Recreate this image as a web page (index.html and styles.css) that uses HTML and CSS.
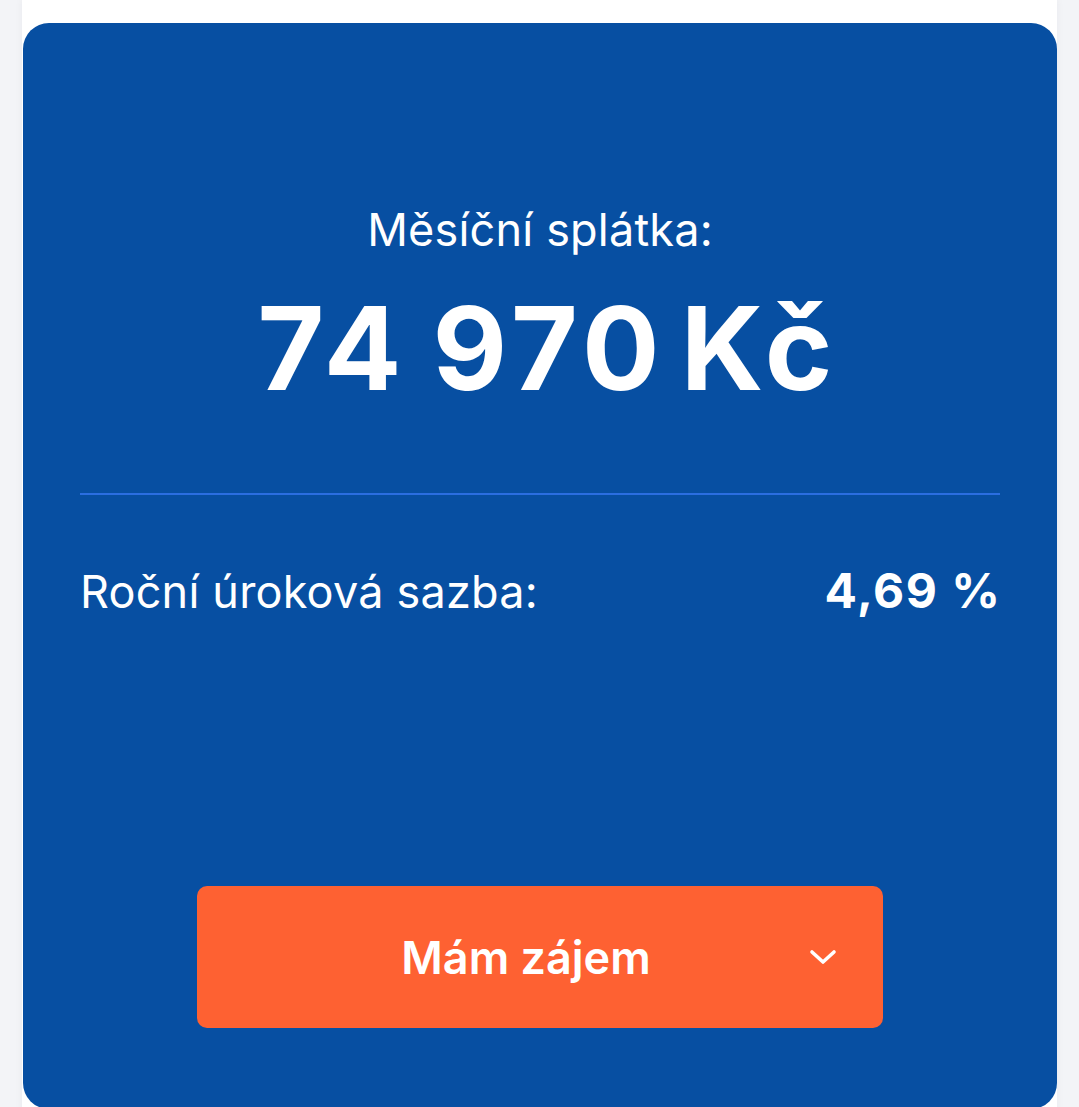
FILE: index.html
```html
<!DOCTYPE html>
<html>
  <head>
    <title>Hypoteční kalkulačka</title>
    <meta charset="UTF-8"/>
    <link rel="stylesheet" href="styles.css">
  </head>
  <body>
    <div id="page">
      <div class="result-card">
        <div class="result-label">Měsíční splátka:</div>
        <div class="result-amount">74&#8198;970&#8202;Kč</div>
        <div class="divider"></div>
        <div class="rate-row">
          <span class="rate-label">Roční úroková sazba:</span>
          <span class="rate-value">4,69 %</span>
        </div>
        <button class="cta" type="button">
          <span class="cta-text">Mám zájem</span>
          <svg class="cta-chevron" width="28" height="16" viewBox="0 0 28 16">
            <polyline points="3,3 14,13 25,3" fill="none" stroke="#fff" stroke-width="3.6" stroke-linecap="round" stroke-linejoin="round"/>
          </svg>
        </button>
      </div>
    </div>
  </body>
</html>
```

FILE: styles.css
```css
body {
  margin: 0;
  font-family: "Inter", "Liberation Sans", sans-serif;
  background-color: #f3f4f7;
  color: white;
}
#page {
  margin: 0 22px 0 22px;
  padding: 23px 0 40px 1px;
  background-color: white;
  box-shadow: 0 0 8px rgba(20, 30, 60, 0.05);
}
.result-card {
  display: flex;
  flex-direction: column;
  align-items: center;
  height: 1086px;
  box-sizing: border-box;
  padding: 180px 57px 0 57px;
  border-radius: 26px;
  background-color: #074fa2;
}
.result-label {
  font-size: 45px;
  line-height: 54px;
  font-weight: 400;
  letter-spacing: 0.2px;
}
.result-amount {
  margin: 34px -6px 0 0;
  padding: 0 0 0 10px;
  font-size: 115px;
  line-height: 116px;
  font-weight: 700;
  letter-spacing: 6px;
}
.divider {
  align-self: stretch;
  height: 2px;
  margin: 86px 0 0 0;
  background-color: #2b6ee0;
}
.rate-row {
  align-self: stretch;
  display: flex;
  justify-content: space-between;
  align-items: baseline;
  margin: 69px 0 0 0;
  line-height: 54px;
}
.rate-label {
  font-size: 45px;
  letter-spacing: 0.2px;
}
.rate-value {
  font-size: 48px;
  font-weight: 700;
  letter-spacing: 1.5px;
  margin-right: -1.5px;
}
.cta {
  display: flex;
  align-items: center;
  width: 686px;
  height: 142px;
  margin: 267px 0 0 0;
  padding: 0 46px;
  border: none;
  border-radius: 10px;
  background-color: #fe6132;
  color: white;
  font-family: "Inter", "Liberation Sans", sans-serif;
  font-size: 45px;
  font-weight: 600;
  cursor: pointer;
}
.cta-text {
  flex: 1;
  text-align: center;
}
.cta-chevron {
  flex: none;
}
```
